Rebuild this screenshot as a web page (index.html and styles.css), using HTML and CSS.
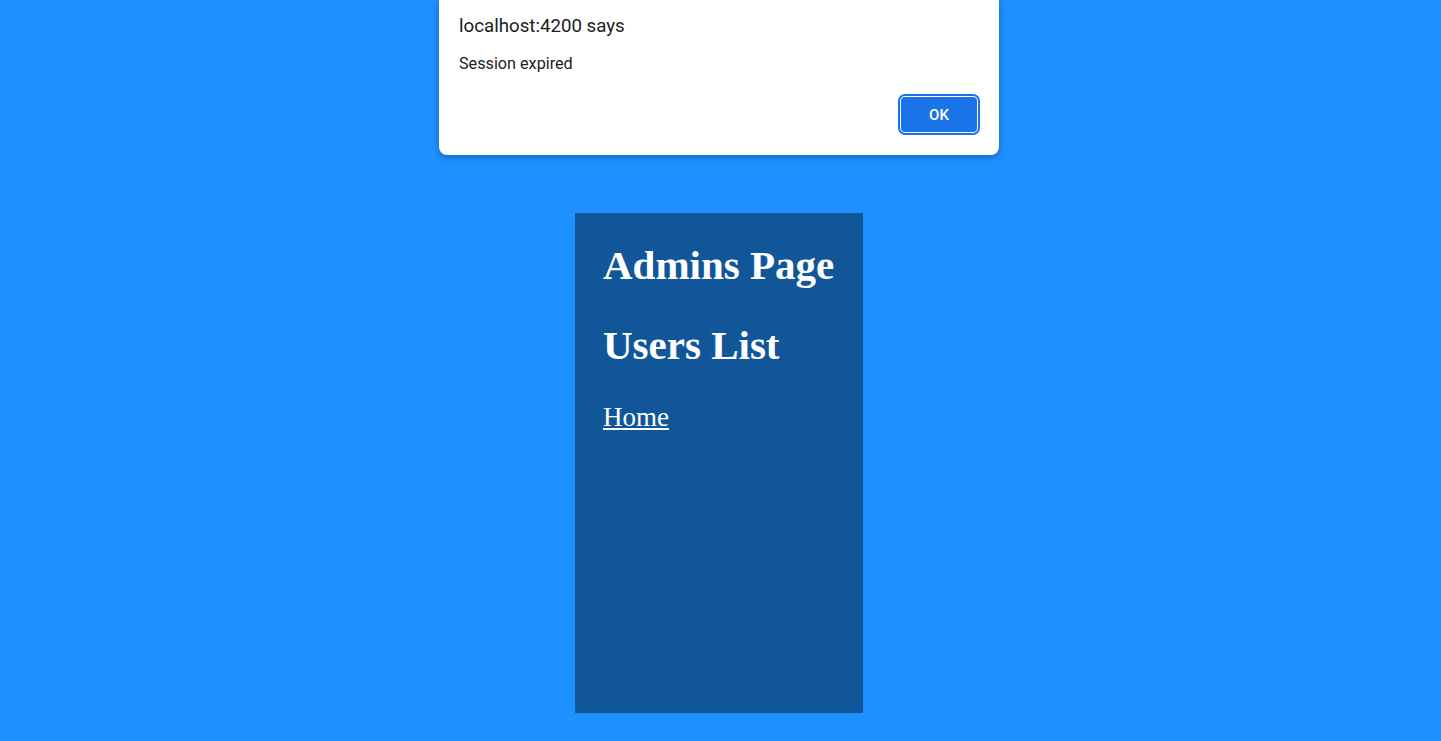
FILE: index.html
```html
<!DOCTYPE html>
<html>
<head>
<meta charset="utf-8">
<link rel="stylesheet" href="styles.css">
</head>
<body>
<main class="page">
  <section class="panel">
    <h1 class="title">Admins Page</h1>
    <h1 class="title">Users List</h1>
    <a class="link" href="#">Home</a>
  </section>
</main>
<div class="dialog">
  <div class="dialog-title">localhost:4200 says</div>
  <div class="dialog-msg">Session expired</div>
  <div class="dialog-actions">
    <button class="ok">OK</button>
  </div>
</div>
</body>
</html>
```
FILE: styles.css
```css
html, body {
  margin: 0;
  padding: 0;
}
body {
  background: #1e90ff;
  width: 1441px;
  height: 741px;
  overflow: hidden;
  font-family: "Liberation Serif", serif;
}
.page {
  display: flex;
  justify-content: center;
  padding: 213px 3px 0 0;
}
.panel {
  width: 232px;
  height: 444px;
  padding: 28px;
  background: #12569a;
  color: #fff;
  display: flex;
  flex-direction: column;
  align-items: flex-start;
}
.title {
  margin: 0 0 32px;
  font-size: 41px;
  line-height: 48px;
  font-weight: bold;
  white-space: nowrap;
}
.link {
  color: #fff;
  font-size: 27px;
  line-height: 31px;
  margin-top: 1px;
  text-decoration: underline;
}
.dialog {
  position: absolute;
  left: 439px;
  top: 0;
  width: 560px;
  height: 155px;
  box-sizing: border-box;
  background: #fff;
  border-radius: 0 0 8px 8px;
  box-shadow: 0 2px 6px rgba(0,0,0,0.3);
  padding: 14px 20px 0;
  font-family: Roboto, "Noto Sans", sans-serif;
  color: #202124;
  display: flex;
  flex-direction: column;
}
.dialog-title {
  font-size: 18.7px;
  line-height: 24px;
}
.dialog-msg {
  font-size: 16.2px;
  line-height: 22px;
  margin-top: 15px;
}
.dialog-actions {
  display: flex;
  justify-content: flex-end;
  margin-top: 22px;
}
.ok {
  width: 76px;
  height: 35px;
  margin-right: 2px;
  background: #1a73e8;
  color: #fff;
  border: none;
  border-radius: 4px;
  font-family: Roboto, "Noto Sans", sans-serif;
  font-size: 15px;
  font-weight: 500;
  outline: 2px solid #1a73e8;
  outline-offset: 1px;
  box-shadow: 0 0 0 1px #fff;
}
```
